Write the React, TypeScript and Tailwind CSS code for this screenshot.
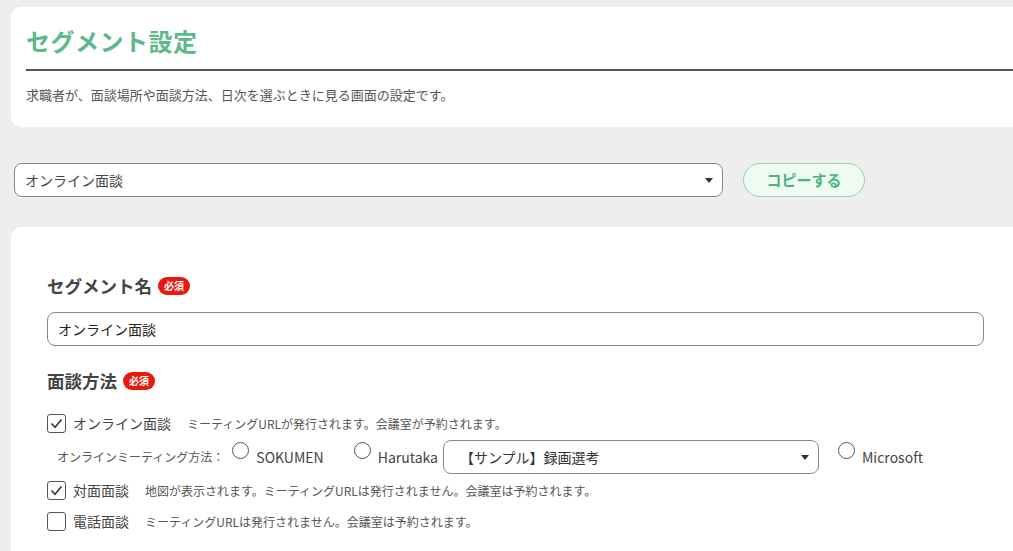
const font = { fontFamily: '"Noto Sans CJK JP", "Noto Sans", sans-serif' }

function Caret() {
  return (
    <svg width="8" height="5" viewBox="0 0 8 5" className="shrink-0">
      <path d="M0 0h8L4 5z" fill="#333" />
    </svg>
  )
}

function Required() {
  return (
    <span className="ml-[6px] inline-flex h-[18px] items-center rounded-full bg-[#e8190f] px-[6px] text-[10px] font-bold leading-none text-white">
      必須
    </span>
  )
}

function Check({ checked }: { checked: boolean }) {
  return (
    <span className="flex h-[19px] w-[19px] shrink-0 items-center justify-center rounded-[3px] border-[1.5px] border-[#555] bg-white">
      {checked && (
        <svg width="13" height="11" viewBox="0 0 13 11">
          <path d="M1.5 5.5l3.5 3.8L11.5 1.5" fill="none" stroke="#333" strokeWidth="1.6" />
        </svg>
      )}
    </span>
  )
}

function Radio({ label }: { label: string }) {
  return (
    <span className="flex items-center">
      <span className="mb-[14px] h-[17px] w-[17px] shrink-0 rounded-full border border-[#555] bg-white" />
      <span className="ml-[7px] text-[14px] text-[#444]">{label}</span>
    </span>
  )
}

function MethodRow({ checked, name, note }: { checked: boolean; name: string; note: string }) {
  return (
    <div className="flex h-[31px] items-center">
      <Check checked={checked} />
      <span className="ml-[7px] text-[14px] text-[#444]">{name}</span>
      <span className="ml-[16px] text-[12px] text-[#555]">{note}</span>
    </div>
  )
}

export default function App() {
  return (
    <div className="min-h-screen overflow-hidden bg-[#eeeeee] pl-[11px] pt-[7px]" style={font}>
      <section className="w-[1030px] rounded-[10px] bg-white pb-[22px] pl-[15px] pt-[14px]">
        <h1 className="text-[24px] font-bold leading-[40px] tracking-[0.5px] text-[#5cba8a]">セグメント設定</h1>
        <div className="mt-[8px] h-[2px] bg-[#555]" />
        <p className="mt-[14px] text-[13px] leading-[20px] text-[#555]">
          求職者が、面談場所や面談方法、日次を選ぶときに見る画面の設定です。
        </p>
      </section>

      <div className="flex items-center pt-[36px]">
        <div className="ml-[3px] flex h-[34px] w-[709px] items-center justify-between rounded-[8px] border border-[#888] bg-white pl-[10px] pr-[9px]">
          <span className="text-[14px] text-[#444]">オンライン面談</span>
          <Caret />
        </div>
        <button className="ml-[20px] flex h-[34px] w-[122px] items-center justify-center rounded-full border border-[#96d6b2] bg-[#eefbf3] text-[15px] font-bold text-[#4db27c]">
          コピーする
        </button>
      </div>

      <section className="mt-[30px] h-[340px] w-[1030px] rounded-[10px] bg-white pl-[36px] pt-[46px]">
        <div className="flex items-center">
          <h2 className="text-[17.5px] font-bold leading-[26px] text-[#444]">セグメント名</h2>
          <Required />
        </div>
        <div className="mt-[13px] flex h-[34px] w-[937px] items-center rounded-[8px] border border-[#888] bg-white pl-[10px]">
          <span className="text-[14px] text-[#222]">オンライン面談</span>
        </div>

        <div className="mt-[22px] flex items-center">
          <h2 className="text-[17.5px] font-bold leading-[26px] text-[#444]">面談方法</h2>
          <Required />
        </div>

        <div className="mt-[14px]">
          <MethodRow checked name="オンライン面談" note="ミーティングURLが発行されます。会議室が予約されます。" />
          <div className="flex h-[36px] items-center pl-[10px]">
            <span className="mr-[8px] text-[12px] text-[#555]">オンラインミーティング方法：</span>
            <Radio label="SOKUMEN" />
            <span className="w-[30px]" />
            <Radio label="Harutaka" />
            <div className="ml-[5px] flex h-[34px] w-[376px] items-center justify-between rounded-[8px] border border-[#888] bg-white pl-[16px] pr-[9px]">
              <span className="text-[14px] text-[#333]">【サンプル】録画選考</span>
              <Caret />
            </div>
            <span className="w-[19px]" />
            <Radio label="Microsoft" />
          </div>
          <MethodRow checked name="対面面談" note="地図が表示されます。ミーティングURLは発行されません。会議室は予約されます。" />
          <MethodRow checked={false} name="電話面談" note="ミーティングURLは発行されません。会議室は予約されます。" />
        </div>
      </section>
    </div>
  )
}
